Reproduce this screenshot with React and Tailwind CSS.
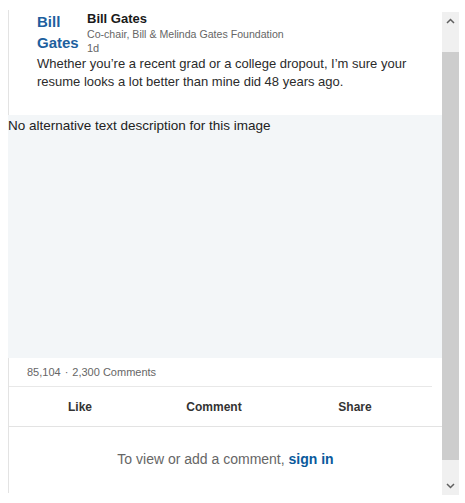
import React from 'react';

const font = { fontFamily: '"Liberation Sans", Arial, sans-serif' };

const Scrollbar = () => (
  <div className="w-[17px] mt-[2px] h-[483px] bg-[#f0f0f0] flex flex-col">
    <div className="h-[40px] flex justify-center pt-[6px]">
      <svg width="9" height="6" viewBox="0 0 9 6">
        <path d="M1 5 L4.5 1.5 L8 5" fill="none" stroke="#606060" strokeWidth="1.5" />
      </svg>
    </div>
    <div className="flex-1 bg-[#cdcdcd]" />
    <div className="h-[35px] flex justify-center items-end pb-[6px]">
      <svg width="9" height="6" viewBox="0 0 9 6">
        <path d="M1 1 L4.5 4.5 L8 1" fill="none" stroke="#606060" strokeWidth="1.5" />
      </svg>
    </div>
  </div>
);

export default function App() {
  return (
    <div className="w-[465px] h-[503px] bg-white pt-[10px] pl-[8px] flex" style={font}>
      <div className="w-[434px] h-[483px] border-l border-[#e3e3e3] flex flex-col">
        {/* Header */}
        <div className="flex pl-[28px] pt-[1px]">
          <div className="w-[50px] text-[15px] leading-[21px] text-[#1d5f9e] font-semibold">
            <div>Bill</div>
            <div>Gates</div>
          </div>
          <div className="flex flex-col">
            <span className="text-[13px] leading-[15px] font-bold text-[#1a1a1a]">Bill Gates</span>
            <span className="text-[10.6px] leading-[14px] text-[#666] mt-[1px]">Co-chair, Bill &amp; Melinda Gates Foundation</span>
            <span className="text-[11px] leading-[14px] text-[#666]">1d</span>
          </div>
        </div>
        <p className="pl-[28px] pr-[20px] text-[13px] leading-[18px] text-[#2b2b2b]">
          Whether you’re a recent grad or a college dropout, I’m sure your resume looks a lot better than mine did 48 years ago.
        </p>

        {/* Image placeholder */}
        <div className="mt-[24px] -ml-px h-[243px] bg-[#f3f6f8] text-[13.5px] leading-[18px] text-[#222] pt-[2px]">
          No alternative text description for this image
        </div>

        {/* Social counts */}
        <div className="mr-[10px] border-b border-[#e8e8e8] h-[29px] flex items-center pl-[18px] pt-[1px] text-[11px] text-[#666]">
          <span>85,104</span>
          <span className="mx-[4px]">·</span>
          <span>2,300 Comments</span>
        </div>

        {/* Actions */}
        <div className="h-[40px] border-b border-[#e3e3e3] flex items-center pt-[1px] text-[12px] font-bold text-[#333]">
          <div className="w-[142px] text-center">Like</div>
          <div className="w-[126px] text-center">Comment</div>
          <div className="w-[156px] text-center">Share</div>
        </div>

        {/* Sign in */}
        <div className="pt-[22px] text-center text-[14px] text-[#666]">
          To view or add a comment, <span className="text-[#0a5a9c] font-bold">sign in</span>
        </div>
      </div>
      <Scrollbar />
    </div>
  );
}
